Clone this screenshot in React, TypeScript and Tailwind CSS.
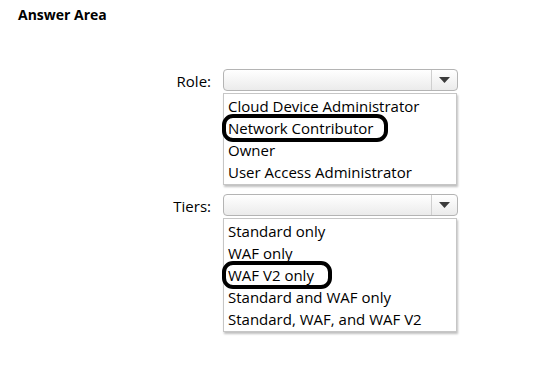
import React from "react";

const font = { fontFamily: '"Open Sans", "Noto Sans", sans-serif' };

function Select({ options, pick, ring }: { options: string[]; pick: number; ring: number }) {
  return (
    <div className="w-[235px]">
      <div className="flex h-[22px] rounded-[4px] border border-[#b4b4b4] bg-gradient-to-b from-[#ffffff] to-[#ebebeb]">
        <div className="flex-1" />
        <div className="flex w-[26px] items-center justify-center border-l border-[#cfcfcf]">
          <svg width="11" height="6" viewBox="0 0 11 6">
            <path d="M0 0 L11 0 L5.5 6 Z" fill="#3c3c3c" />
          </svg>
        </div>
      </div>
      <div className="mt-[2px] w-[234px] border border-[#c6c6c6] bg-white py-px shadow-[1px_2px_2px_rgba(0,0,0,0.25)]">
        {options.map((o, i) => (
          <div key={o} className="relative h-[22px] pl-[4px] text-[15px] leading-[22px] text-black">
            {o}
            {i === pick && (
              <span
                className="absolute -left-[2px] -top-[3px] h-[28px] rounded-[11px] border-[4px] border-black"
                style={{ width: ring }}
              />
            )}
          </div>
        ))}
      </div>
    </div>
  );
}

export default function App() {
  return (
    <div className="h-[372px] w-[536px] bg-white text-black" style={font}>
      <div className="pl-[18px] pt-[4px] text-[14px] font-bold">Answer Area</div>

      <div className="mt-[44px] flex flex-col gap-[9px]">
        <div className="flex items-start gap-[12px]">
          <div className="w-[211px] pt-px text-right text-[15px] leading-[22px]">Role:</div>
          <Select
            options={["Cloud Device Administrator", "Network Contributor", "Owner", "User Access Administrator"]}
            pick={1}
            ring={166}
          />
        </div>
        <div className="flex items-start gap-[12px]">
          <div className="w-[211px] pt-px text-right text-[15px] leading-[22px]">Tiers:</div>
          <Select
            options={["Standard only", "WAF only", "WAF V2 only", "Standard and WAF only", "Standard, WAF, and WAF V2"]}
            pick={2}
            ring={110}
          />
        </div>
      </div>
    </div>
  );
}
